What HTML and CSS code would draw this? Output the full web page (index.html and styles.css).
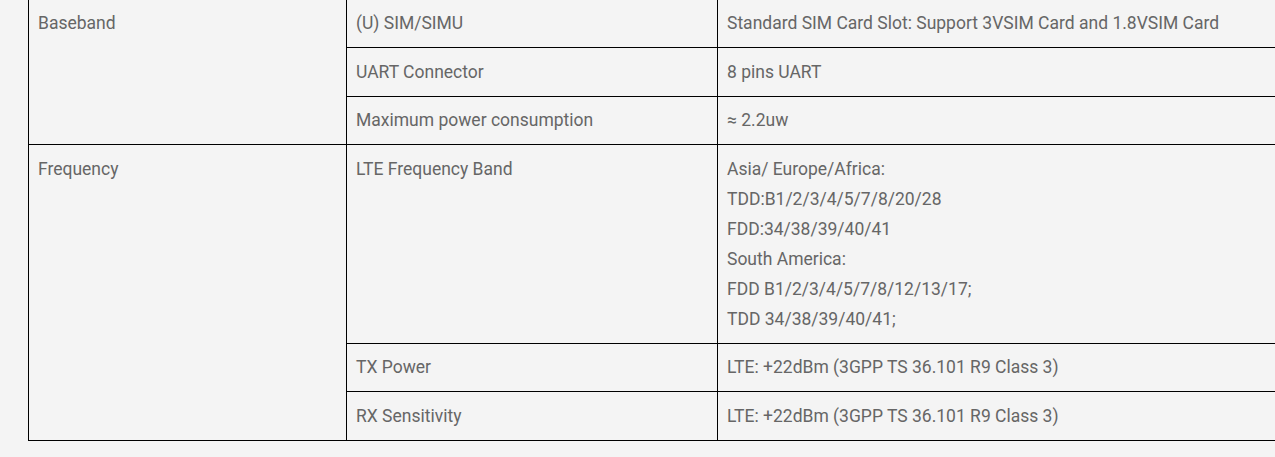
FILE: index.html
```html
<!DOCTYPE html>
<html lang="en">
<head>
<meta charset="utf-8">
<link rel="stylesheet" href="styles.css">
</head>
<body>
<div class="page">
  <table class="spec">
    <colgroup>
      <col class="c1">
      <col class="c2">
      <col class="c3">
    </colgroup>
    <tbody>
      <tr>
        <td rowspan="3">Baseband</td>
        <td>(U) SIM/SIMU</td>
        <td>Standard SIM Card Slot: Support 3VSIM Card and 1.8VSIM Card</td>
      </tr>
      <tr>
        <td>UART Connector</td>
        <td>8 pins UART</td>
      </tr>
      <tr>
        <td>Maximum power consumption</td>
        <td>≈ 2.2uw</td>
      </tr>
      <tr>
        <td rowspan="3">Frequency</td>
        <td>LTE Frequency Band</td>
        <td>Asia/ Europe/Africa:<br>TDD:B1/2/3/4/5/7/8/20/28<br>FDD:34/38/39/40/41<br>South America:<br>FDD B1/2/3/4/5/7/8/12/13/17;<br>TDD 34/38/39/40/41;</td>
      </tr>
      <tr>
        <td>TX Power</td>
        <td>LTE: +22dBm (3GPP TS 36.101 R9 Class 3)</td>
      </tr>
      <tr>
        <td>RX Sensitivity</td>
        <td>LTE: +22dBm (3GPP TS 36.101 R9 Class 3)</td>
      </tr>
    </tbody>
  </table>
</div>
</body>
</html>
```
FILE: styles.css
```css
html, body {
  margin: 0;
  padding: 0;
  background: #f4f4f4;
  overflow: hidden;
}
.page {
  padding-left: 28px;
  margin-top: -1.5px;
  width: 1300px;
}
.spec {
  border-collapse: collapse;
  width: 1280px;
  table-layout: fixed;
  font-family: Roboto, "Liberation Sans", sans-serif;
  font-size: 17.5px;
  line-height: 30px;
  color: #666;
}
.c1 { width: 318px; }
.c2 { width: 371px; }
.spec td {
  border: 1px solid #000;
  padding: 8.75px 9px;
  vertical-align: top;
  text-align: left;
}
```
